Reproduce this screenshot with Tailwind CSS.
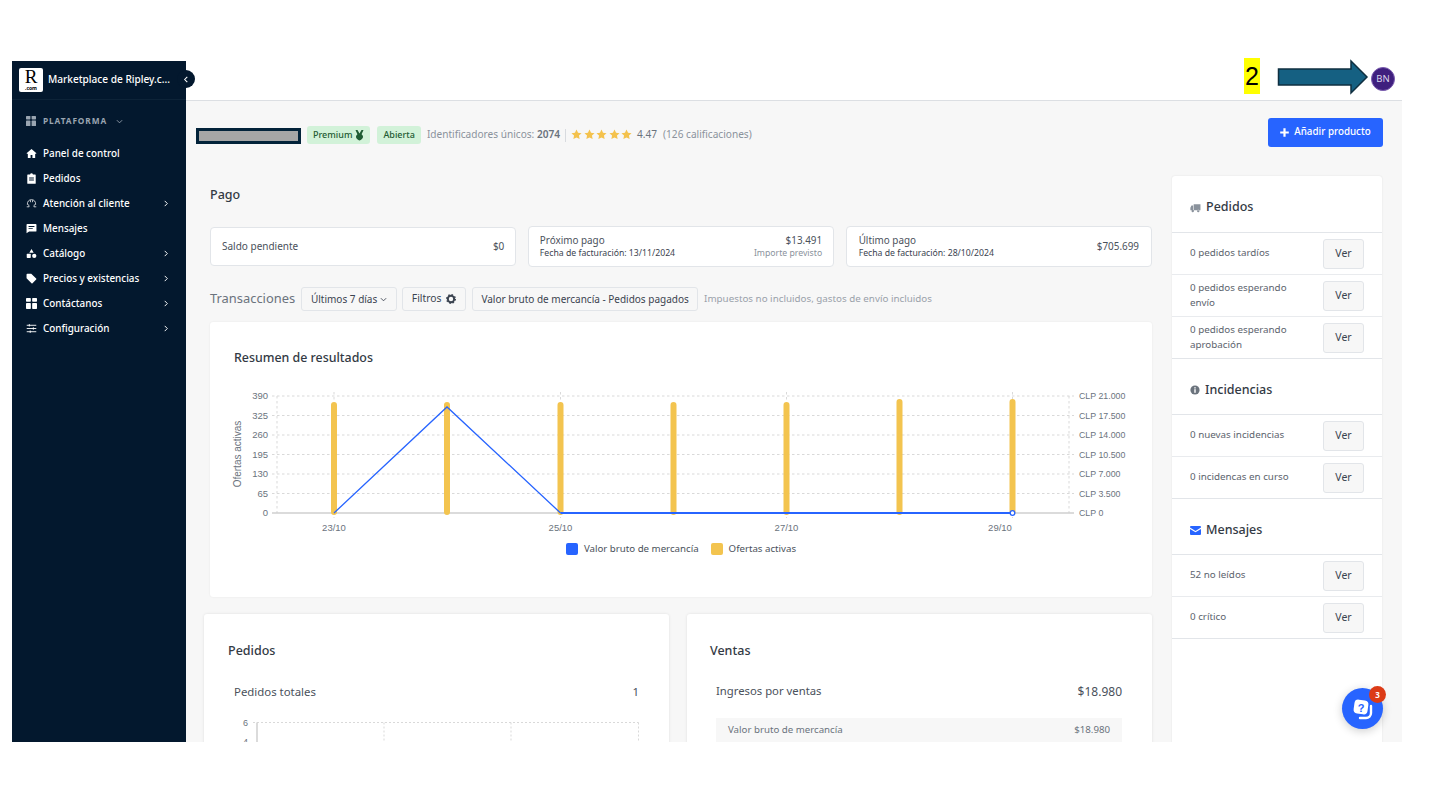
<!DOCTYPE html>
<html lang="es">
<head>
<meta charset="utf-8">
<title>Marketplace de Ripley</title>
<script src="https://cdn.jsdelivr.net/npm/@tailwindcss/browser@4"></script>
</head>
<body class="bg-white font-['Noto_Sans',sans-serif] text-[#3b4350]">
<div class="relative w-[1441px] h-[801px] overflow-hidden pt-[61px] pl-[12px]">
  <div class="relative w-[1390px] h-[681px] overflow-hidden flex">
    <!-- Sidebar -->
    <aside class="w-[174px] shrink-0 bg-[#03182e] text-white flex flex-col">
      <div class="h-[39px] flex items-center pl-[7px] gap-[5px] border-b border-[#0d2338]">
        <div class="w-[24px] h-[24px] bg-white rounded-[2px] flex flex-col items-center justify-start pt-[1px] text-black">
          <span class="font-['Liberation_Serif',serif] text-[19px] leading-[16px] h-[16px]">R</span>
          <span class="text-[5px] leading-[6px] h-[6px] font-bold">.com</span>
        </div>
        <span class="text-[10.1px] font-medium whitespace-nowrap">Marketplace de Ripley.c...</span>
      </div>
      <div class="flex items-center h-[14px] mt-[14px] pl-[14px] gap-[7px] text-[#9aa5b1]">
        <svg class="w-[10px] h-[10px]" viewBox="0 0 10 10" fill="currentColor"><rect width="4.4" height="3.4" rx=".6"/><rect x="5.600" width="4.4" height="3.4" rx=".6"/><rect y="4.6" width="4.4" height="5.4" rx=".6"/><rect x="5.600" y="4.6" width="4.4" height="5.4" rx=".6"/></svg>
        <span class="text-[8.3px] font-bold tracking-[0.9px]">PLATAFORMA</span>
        <svg class="w-[7px] h-[7px] ml-[2px]" viewBox="0 0 8 8" fill="none" stroke="currentColor" stroke-width="1"><path d="M1 2.5 4 5.5 7 2.5"/></svg>
      </div>
      <nav class="mt-[13px] flex flex-col text-[9.9px] font-medium">
        <a class="h-[25px] flex items-center pl-[14px] pr-[17px]"><svg class="w-[11px] h-[11px] mr-[6px]" viewBox="0 0 12 12" fill="white"><path d="M6 1 0.6 5.800l.7.8L2 6v5h3V7.600h2V11h3V6l.7.6.7-.8z"/></svg><span>Panel de control</span></a>
        <a class="h-[25px] flex items-center pl-[14px] pr-[17px]"><svg class="w-[11px] h-[11px] mr-[6px]" viewBox="0 0 12 12" fill="white"><path fill-rule="evenodd" d="M2 1.500h2.400C4.600.8 5.200.4 6 .4s1.400.4 1.600 1.100H10a.6.6 0 0 1 .6.6v9a.6.6 0 0 1-.6.6H2a.6.6 0 0 1-.6-.6v-9a.6.6 0 0 1 .6-.6zM3.400 5v1h5.200V5zm0 2.200v1h5.200v-1z"/></svg><span>Pedidos</span></a>
        <a class="h-[25px] flex items-center pl-[14px] pr-[17px]"><svg class="w-[11px] h-[11px] mr-[6px]" viewBox="0 0 12 12" fill="none" stroke="white" stroke-width=".8"><path d="M1.500 7.500C1.200 3.800 3.200 1.800 6 1.800s4.800 2 4.500 5.700M.8 9.600h2.600L2.800 7M11.200 9.600H8.600L9.200 7M4.600 2.200 5 4.600M7.400 2.200 7 4.600"/></svg><span>Atención al cliente</span><svg class="w-[6px] h-[7px] ml-auto" viewBox="0 0 6 8" fill="none" stroke="white" stroke-width="1.1"><path d="M1.500 1 4.500 4 1.500 7"/></svg></a>
        <a class="h-[25px] flex items-center pl-[14px] pr-[17px]"><svg class="w-[11px] h-[11px] mr-[6px]" viewBox="0 0 12 12" fill="white"><path fill-rule="evenodd" d="M1.400 1.200h9.200a.8.8 0 0 1 .8.8v6.600a.8.8 0 0 1-.8.8H3.400L.6 11.200V2a.8.8 0 0 1 .8-.8zM2.800 3.400v1h6.400v-1zm0 2.200v1h4.600v-1z"/></svg><span>Mensajes</span></a>
        <a class="h-[25px] flex items-center pl-[14px] pr-[17px]"><svg class="w-[11px] h-[11px] mr-[6px]" viewBox="0 0 12 12" fill="white"><path d="M6 1 8.400 5.200H3.600z"/><rect x=".8" y="6.4" width="4.4" height="4.4" rx=".7"/><circle cx="9" cy="8.6" r="2.3"/></svg><span>Catálogo</span><svg class="w-[6px] h-[7px] ml-auto" viewBox="0 0 6 8" fill="none" stroke="white" stroke-width="1.1"><path d="M1.500 1 4.500 4 1.500 7"/></svg></a>
        <a class="h-[25px] flex items-center pl-[14px] pr-[17px]"><svg class="w-[11px] h-[11px] mr-[6px]" viewBox="0 0 12 12" fill="white"><path d="M.6 1.600v4.200l5.400 5.400a.8.8 0 0 0 1.100 0l4-4a.8.8 0 0 0 0-1.100L5.700.7H1.500a.9.9 0 0 0-.9.9z"/></svg><span>Precios y existencias</span><svg class="w-[6px] h-[7px] ml-auto" viewBox="0 0 6 8" fill="none" stroke="white" stroke-width="1.1"><path d="M1.500 1 4.500 4 1.500 7"/></svg></a>
        <a class="h-[25px] flex items-center pl-[14px] pr-[17px]"><svg class="w-[11px] h-[11px] mr-[6px]" viewBox="0 0 10 10" fill="white"><rect width="4.4" height="3.4" rx=".6"/><rect x="5.600" width="4.4" height="3.4" rx=".6"/><rect y="4.6" width="4.4" height="5.4" rx=".6"/><rect x="5.600" y="4.6" width="4.4" height="5.4" rx=".6"/></svg><span>Contáctanos</span><svg class="w-[6px] h-[7px] ml-auto" viewBox="0 0 6 8" fill="none" stroke="white" stroke-width="1.1"><path d="M1.500 1 4.500 4 1.500 7"/></svg></a>
        <a class="h-[25px] flex items-center pl-[14px] pr-[17px]"><svg class="w-[11px] h-[11px] mr-[6px]" viewBox="0 0 12 12" fill="none" stroke="white" stroke-width="1"><path d="M.8 2.500h10.400M.8 6h10.400M.8 9.500h10.400M3.600 1.200v2.600M8 4.700v2.600M4.600 8.200v2.600"/></svg><span>Configuración</span><svg class="w-[6px] h-[7px] ml-auto" viewBox="0 0 6 8" fill="none" stroke="white" stroke-width="1.1"><path d="M1.500 1 4.500 4 1.500 7"/></svg></a>
      </nav>
    </aside>

    <!-- Main -->
    <main class="flex-1 min-w-0 flex flex-col">
      <header class="h-[40px] shrink-0 bg-white border-b border-[#dcdfe3] flex items-center justify-end pr-[7px]">
        <div class="w-[24px] h-[24px] mb-[3px] rounded-full bg-[#3f1f7e] border border-[#7a5cb0] text-[#d9d3ea] text-[9.5px] flex items-center justify-center">BN</div>
      </header>
      <div class="flex-1 min-h-0 bg-[#f7f7f7]">
        <!-- Head row -->
        <div class="flex items-center h-[29px] mt-[17px] pl-[10px] pr-[19px]">
          <div class="w-[105px] h-[16px] mt-[7px] bg-[#a6a6a6] border-[3px] border-[#03233a]"></div>
          <span class="ml-[6px] mt-[5px] h-[18px] px-[6px] rounded-[3px] bg-[#d2f2d9] text-[#1f5c34] text-[9px] font-medium flex items-center gap-[3px]">Premium
            <svg class="w-[9px] h-[11px]" viewBox="0 0 9 11" fill="#1f5c34"><path d="M.5 0h2L4.500 3.500 6.500 0h2L6.600 4.300a3.300 3.300 0 1 1-4.200 0z"/></svg></span>
          <span class="ml-[7px] mt-[5px] h-[18px] px-[6px] rounded-[3px] bg-[#d2f2d9] text-[#1f5c34] text-[9px] font-medium flex items-center">Abierta</span>
          <span class="ml-[6px] mt-[5px] text-[10.1px] text-[#8a929c] whitespace-nowrap">Identificadores únicos: <b class="font-semibold text-[#6b737d]">2074</b></span>
          <span class="ml-[5px] mt-[5px] h-[13px] border-l border-[#d8dbdf]"></span>
          <span class="ml-[5px] mt-[3px] flex gap-[1.5px] text-[#f4c24d]">
            <svg class="w-[11px] h-[11px]" viewBox="0 0 12 12" fill="currentColor"><path d="M6 .6 7.700 4l3.800.5-2.800 2.700.7 3.800L6 9.200 2.600 11l.7-3.800L.5 4.500 4.300 4z"/></svg>
            <svg class="w-[11px] h-[11px]" viewBox="0 0 12 12" fill="currentColor"><path d="M6 .6 7.700 4l3.800.5-2.800 2.700.7 3.800L6 9.200 2.600 11l.7-3.800L.5 4.500 4.300 4z"/></svg>
            <svg class="w-[11px] h-[11px]" viewBox="0 0 12 12" fill="currentColor"><path d="M6 .6 7.700 4l3.800.5-2.800 2.700.7 3.800L6 9.200 2.600 11l.7-3.800L.5 4.500 4.300 4z"/></svg>
            <svg class="w-[11px] h-[11px]" viewBox="0 0 12 12" fill="currentColor"><path d="M6 .6 7.700 4l3.800.5-2.800 2.700.7 3.800L6 9.200 2.600 11l.7-3.800L.5 4.500 4.300 4z"/></svg>
            <svg class="w-[11px] h-[11px]" viewBox="0 0 12 12" fill="currentColor"><path d="M6 .6 7.700 4l3.800.5-2.800 2.700.7 3.800L6 9.200 2.600 11l.7-3.800L.5 4.500 4.300 4z"/></svg>
          </span>
          <span class="ml-[5px] mt-[5px] text-[10.1px] text-[#6b737d]">4.47</span>
          <span class="ml-[6px] mt-[5px] text-[10.1px] text-[#8a929c] whitespace-nowrap">(126 calificaciones)</span>
          <button class="ml-auto w-[115px] h-[29px] rounded-[3px] bg-[#2764ff] text-white text-[9.8px] font-medium flex items-center justify-center gap-[5px]">
            <svg class="w-[9px] h-[9px]" viewBox="0 0 9 9" fill="white"><path d="M3.400.2h2.200v3.200h3.200v2.200H5.600v3.200H3.400V5.600H.2V3.400h3.200z"/></svg>Añadir producto</button>
        </div>

        <div class="flex mt-[29px] ml-[18px] gap-[20px]">
          <!-- Left -->
          <div class="w-[948px] shrink-0">
            <div class="pl-[6px]">
              <h2 class="h-[38px] flex items-center text-[12.5px] font-medium text-[#333a44]">Pago</h2>
              <div class="grid grid-cols-3 gap-[11.5px] items-center mt-[12px] h-[41px]">
                <div class="h-[39px] bg-white border border-[#e2e5e9] rounded-[4px] px-[11px] flex items-center justify-between text-[10px] text-[#4a515b]"><span>Saldo pendiente</span><span>$0</span></div>
                <div class="h-[41px] bg-white border border-[#e2e5e9] rounded-[4px] px-[11px] flex flex-col justify-center">
                  <div class="flex justify-between text-[9.9px] leading-[14px] text-[#4a515b]"><span>Próximo pago</span><span>$13.491</span></div>
                  <div class="flex justify-between text-[8.7px] leading-[13px]"><span class="text-[#3b4350]">Fecha de facturación: 13/11/2024</span><span class="text-[#8a929c]">Importe previsto</span></div>
                </div>
                <div class="h-[41px] bg-white border border-[#e2e5e9] rounded-[4px] px-[12px] flex items-center justify-between">
                  <div class="flex flex-col"><span class="text-[9.9px] leading-[14px] text-[#4a515b]">Último pago</span><span class="text-[8.7px] leading-[13px]">Fecha de facturación: 28/10/2024</span></div>
                  <span class="text-[9.9px] text-[#4a515b]">$705.699</span>
                </div>
              </div>
              <div class="flex items-center h-[24px] mt-[20px] whitespace-nowrap">
                <span class="text-[12.9px] text-[#6b737d]">Transacciones</span>
                <span class="ml-[6px] h-[24px] w-[96px] border border-[#e2e5e9] rounded-[3px] text-[10px] flex items-center justify-center gap-[3px]">Últimos 7 días
                  <svg class="w-[7px] h-[7px]" viewBox="0 0 8 8" fill="none" stroke="currentColor" stroke-width="1"><path d="M1 2.500 4 5.500 7 2.500"/></svg></span>
                <span class="ml-[5px] h-[24px] w-[64px] border border-[#e2e5e9] rounded-[3px] text-[10.300px] flex items-center justify-center gap-[5px]">Filtros
                  <svg class="w-[10px] h-[10px]" viewBox="0 0 10 10"><circle cx="5" cy="5" r="3.200" fill="none" stroke="#3b4350" stroke-width="2"/><circle cx="5" cy="5" r="4.400" fill="none" stroke="#3b4350" stroke-width="1.200" stroke-dasharray="1.600 1.850"/></svg></span>
                <span class="ml-[6px] h-[24px] w-[226px] border border-[#e2e5e9] rounded-[3px] text-[10px] flex items-center justify-center">Valor bruto de mercancía - Pedidos pagados</span>
                <span class="ml-[6px] text-[9.8px] text-[#9aa1aa]">Impuestos no incluidos, gastos de envío incluidos</span>
              </div>
              <!-- Chart card -->
              <section class="h-[275px] mt-[11px] bg-white rounded-[3px] shadow-[0_0_2px_rgba(0,0,0,0.08)] flex flex-col">
                <h3 class="ml-[24px] mt-[26px] h-[20px] flex items-center text-[12.4px] font-medium text-[#333a44]">Resumen de resultados</h3>
                <svg class="mt-[15px] block" width="942" height="152" viewBox="210 383 942 152" font-family="'Liberation Sans',sans-serif" font-size="9.5" fill="#6b737d">
                  <g stroke="#d9d9d9" stroke-dasharray="2.500 2.500" stroke-width="1">
                    <path d="M272 396H1074M272 415.500H1074M272 435H1074M272 454.500H1074M272 474H1074M272 493.500H1074"/>
                    <path d="M277 396V513M1069 396V513M334 392V518M560.500 392V518M786.500 392V518M1012.500 392V518"/>
                  </g>
                  <path d="M272 513H1074" stroke="#cfcfcf" stroke-width="1.500"/>
                  <g stroke="#f3c44f" stroke-width="6" stroke-linecap="round">
                    <path d="M334 405V512M447 405V512M560.500 405V512M673.500 405V512M786.500 405V512M899.500 402V512M1012.500 402V512"/>
                  </g>
                  <path d="M334 513 447 407 560.500 513" fill="none" stroke="#2764ff" stroke-width="1.300"/>
                  <path d="M560.500 513H1012.500" fill="none" stroke="#2764ff" stroke-width="2"/>
                  <circle cx="1012.500" cy="513" r="2.300" fill="#fff" stroke="#2764ff" stroke-width="1.300"/>
                  <g text-anchor="end">
                    <text x="268" y="399">390</text><text x="268" y="418.500">325</text><text x="268" y="438">260</text><text x="268" y="457.500">195</text><text x="268" y="477">130</text><text x="268" y="496.500">65</text><text x="268" y="516">0</text>
                  </g>
                  <g font-size="8.800">
                    <text x="1079" y="399">CLP 21.000</text><text x="1079" y="418.500">CLP 17.500</text><text x="1079" y="438">CLP 14.000</text><text x="1079" y="457.500">CLP 10.500</text><text x="1079" y="477">CLP 7.000</text><text x="1079" y="496.500">CLP 3.500</text><text x="1079" y="516">CLP 0</text>
                  </g>
                  <g text-anchor="middle">
                    <text x="334" y="531">23/10</text><text x="560.500" y="531">25/10</text><text x="786.500" y="531">27/10</text><text x="1000" y="531">29/10</text>
                  </g>
                  <text transform="translate(241 454) rotate(-90)" text-anchor="middle" font-size="10">Ofertas activas</text>
                </svg>
                <div class="mt-[7px] flex justify-center items-center gap-[6px] text-[9.700px] text-[#4a515b]">
                  <span class="w-[12px] h-[12px] rounded-[2px] bg-[#2764ff]"></span><span class="mr-[6px]">Valor bruto de mercancía</span>
                  <span class="w-[12px] h-[12px] rounded-[2px] bg-[#f3c44f]"></span><span>Ofertas activas</span>
                </div>
              </section>
            </div>
            <!-- Bottom cards -->
            <div class="grid grid-cols-2 gap-[18px] mt-[17px]">
              <section class="h-[200px] bg-white rounded-[3px] shadow-[0_0_3px_rgba(0,0,0,0.1)] pt-[28px]">
                <h3 class="ml-[24px] h-[18px] flex items-center text-[12.5px] font-medium text-[#333a44]">Pedidos</h3>
                <div class="mt-[23px] mx-[30px] flex justify-between text-[11.4px] text-[#4a515b]"><span>Pedidos totales</span><span>1</span></div>
                <svg class="mt-[14px] ml-[30px] block" width="410" height="60" viewBox="234 715 410 60" font-family="'Liberation Sans',sans-serif" font-size="9" fill="#6b737d">
                  <path d="M253 723.500H638.500M384 723.500V775M511 723.500V775M638.500 723.500V775" stroke="#d9d9d9" stroke-dasharray="2 2" fill="none"/>
                  <path d="M257 723.500V775" stroke="#cfcfcf" stroke-width="1.500"/>
                  <text x="248" y="727" text-anchor="end">6</text><text x="248" y="746" text-anchor="end">4</text>
                </svg>
              </section>
              <section class="h-[200px] bg-white rounded-[3px] shadow-[0_0_3px_rgba(0,0,0,0.1)] pt-[28px]">
                <h3 class="ml-[23px] h-[18px] flex items-center text-[12.5px] font-medium text-[#333a44]">Ventas</h3>
                <div class="mt-[23px] ml-[29px] mr-[30px] flex justify-between text-[11.3px] text-[#4a515b]"><span>Ingresos por ventas</span><span class="text-[12px]">$18.980</span></div>
                <div class="mt-[17px] ml-[29px] mr-[30px] h-[25px] px-[12px] bg-[#f7f7f7] flex items-center justify-between text-[9.700px] text-[#6b737d]"><span>Valor bruto de mercancía</span><span>$18.980</span></div>
              </section>
            </div>
          </div>

          <!-- Right panel -->
          <aside class="w-[210px] shrink-0 h-[600px] bg-white rounded-t-[3px] shadow-[0_0_2px_rgba(0,0,0,0.1)] text-[9.800px] text-[#5c636d]">
            <div class="h-[57px] border-b border-[#e2e5e9] flex items-center pl-[18px] gap-[5px] pt-[7px] text-[12.5px] font-medium text-[#333a44]">
              <svg class="w-[11px] h-[10px]" viewBox="0 0 12 10" fill="#8a929c"><path d="M4 .8h7.400v6.600H4zM3.400 2.400H1.600L.4 4.600v2.800h3zM3 9.600a1.300 1.300 0 1 0 0-2.600 1.300 1.300 0 0 0 0 2.600zM9 9.600A1.300 1.300 0 1 0 9 7a1.300 1.300 0 0 0 0 2.600z"/></svg>Pedidos</div>
            <div class="h-[42px] border-b border-[#e9ebee] flex items-center justify-between pl-[18px] pr-[18px]"><span>0 pedidos tardíos</span><span class="w-[41px] h-[30px] bg-[#f7f7f7] border border-[#e2e5e9] rounded-[3px] text-[10.500px] text-[#3b4350] flex items-center justify-center">Ver</span></div>
            <div class="h-[42px] border-b border-[#e9ebee] flex items-center justify-between pl-[18px] pr-[18px]"><span class="w-[110px] leading-[14.500px]">0 pedidos esperando envío</span><span class="w-[41px] h-[30px] bg-[#f7f7f7] border border-[#e2e5e9] rounded-[3px] text-[10.500px] text-[#3b4350] flex items-center justify-center">Ver</span></div>
            <div class="h-[42px] border-b border-[#e2e5e9] flex items-center justify-between pl-[18px] pr-[18px]"><span class="w-[110px] leading-[14.500px]">0 pedidos esperando aprobación</span><span class="w-[41px] h-[30px] bg-[#f7f7f7] border border-[#e2e5e9] rounded-[3px] text-[10.500px] text-[#3b4350] flex items-center justify-center">Ver</span></div>
            <div class="h-[56px] border-b border-[#e2e5e9] flex items-center pl-[18px] gap-[5px] pt-[7px] text-[12.5px] font-medium text-[#333a44]">
              <svg class="w-[10px] h-[10px]" viewBox="0 0 10 10"><circle cx="5" cy="5" r="4.600" fill="#6b737d"/><rect x="4.300" y="4.200" width="1.400" height="3.600" fill="#fff"/><rect x="4.300" y="2.200" width="1.400" height="1.300" fill="#fff"/></svg>Incidencias</div>
            <div class="h-[42px] border-b border-[#e9ebee] flex items-center justify-between pl-[18px] pr-[18px]"><span>0 nuevas incidencias</span><span class="w-[41px] h-[30px] bg-[#f7f7f7] border border-[#e2e5e9] rounded-[3px] text-[10.500px] text-[#3b4350] flex items-center justify-center">Ver</span></div>
            <div class="h-[42px] border-b border-[#e2e5e9] flex items-center justify-between pl-[18px] pr-[18px]"><span>0 incidencas en curso</span><span class="w-[41px] h-[30px] bg-[#f7f7f7] border border-[#e2e5e9] rounded-[3px] text-[10.500px] text-[#3b4350] flex items-center justify-center">Ver</span></div>
            <div class="h-[56px] border-b border-[#e2e5e9] flex items-center pl-[18px] gap-[5px] pt-[7px] text-[12.5px] font-medium text-[#333a44]">
              <svg class="w-[11px] h-[9px]" viewBox="0 0 11 9" fill="#2764ff"><path d="M1 0h9a1 1 0 0 1 1 1v.6L5.500 5 0 1.600V1a1 1 0 0 1 1-1zM0 2.900l5.500 3.400L11 2.900V8a1 1 0 0 1-1 1H1a1 1 0 0 1-1-1z"/></svg>Mensajes</div>
            <div class="h-[42px] border-b border-[#e9ebee] flex items-center justify-between pl-[18px] pr-[18px]"><span>52 no leídos</span><span class="w-[41px] h-[30px] bg-[#f7f7f7] border border-[#e2e5e9] rounded-[3px] text-[10.500px] text-[#3b4350] flex items-center justify-center">Ver</span></div>
            <div class="h-[42px] border-b border-[#e2e5e9] flex items-center justify-between pl-[18px] pr-[18px]"><span>0 crítico</span><span class="w-[41px] h-[30px] bg-[#f7f7f7] border border-[#e2e5e9] rounded-[3px] text-[10.500px] text-[#3b4350] flex items-center justify-center">Ver</span></div>
          </aside>
        </div>
      </div>
    </main>

    <!-- Collapse toggle over the sidebar edge -->
    <button class="absolute left-[165px] top-[9px] w-[18px] h-[18px] rounded-full bg-[#03182e] flex items-center justify-center">
      <svg class="w-[6px] h-[7px]" viewBox="0 0 6 8" fill="none" stroke="white" stroke-width="1.200"><path d="M4.500 1 1.500 4 4.500 7"/></svg>
    </button>
    <!-- Help bubble -->
    <div class="absolute left-[1330px] top-[627px] w-[41px] h-[41px] rounded-full bg-[#2764ff] shadow-[0_2px_10px_rgba(0,0,0,0.2)] flex items-center justify-center">
      <svg class="w-[22px] h-[22px]" viewBox="0 0 22 22"><rect x="2" y="2" width="14" height="14" rx="4" fill="#fff" transform="rotate(8 9 9)"/><path d="M19 8v7a5 5 0 0 1-5 5H8" fill="none" stroke="#fff" stroke-width="2.400" stroke-linecap="round"/><text x="9" y="13.500" text-anchor="middle" font-family="'Liberation Sans',sans-serif" font-size="11" font-weight="700" fill="#2764ff">?</text></svg>
      <span class="absolute -top-[2px] -right-[3px] w-[17px] h-[17px] rounded-full bg-[#dc3b17] text-white text-[8px] font-bold flex items-center justify-center">3</span>
    </div>
  </div>

  <!-- Annotation laid over the screenshot -->
  <div class="absolute left-[1244px] top-[58px] w-[16px] h-[36px] bg-[#ffff00] text-black font-['Liberation_Sans',sans-serif] text-[25px] leading-[36px] text-center">2</div>
  <svg class="absolute left-[1276px] top-[58px]" width="94" height="38" viewBox="0 0 94 38"><path d="M2.500 11H75V3L91 19 75 35V27H2.500z" fill="#156082" stroke="#0f2f40" stroke-width="1.500"/></svg>
</div>
</body>
</html>
